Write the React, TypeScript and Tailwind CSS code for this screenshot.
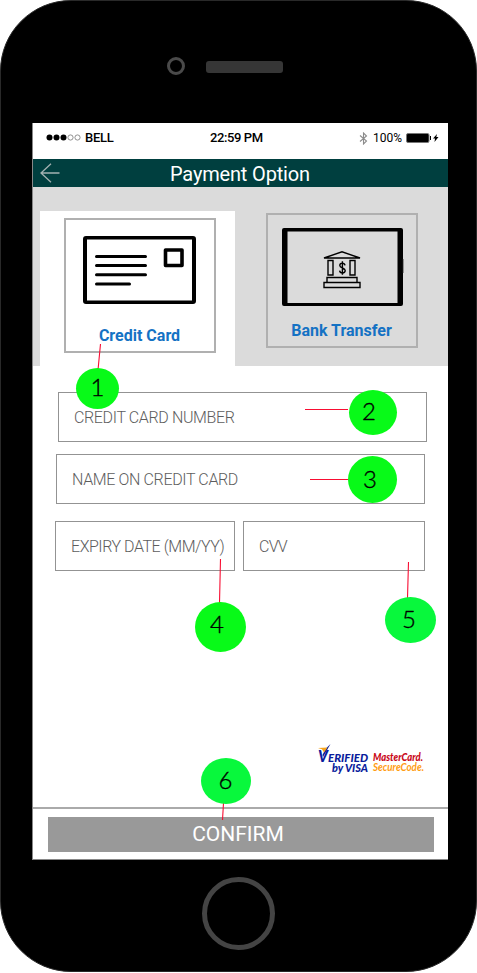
import React from 'react';

type Marker = { label: string; box: string; digit: string };

const markers: Marker[] = [
  { label: '1', box: 'left-[76px] top-[368px] w-[43px] h-[41px] bg-[#08fa18]', digit: 'pb-[3px] pl-0' },
  { label: '2', box: 'left-[349px] top-[390px] w-[48px] h-[45px] bg-[#08fa18]', digit: 'pb-1 pr-2' },
  { label: '3', box: 'left-[348px] top-[456px] w-[49px] h-[47px] bg-[#08fa18]', digit: 'pb-0.5 pr-[5px]' },
  { label: '4', box: 'left-[195px] top-[602px] w-[51px] h-[50px] bg-[#08fa18]', digit: 'pb-1.5 pr-[7px]' },
  { label: '5', box: 'left-[385px] top-[597px] w-[51px] h-[46px] bg-[#08f83c]', digit: 'pb-0.5 pr-[3px]' },
  { label: '6', box: 'left-[201px] top-[758px] w-[50px] h-[46px] bg-[#08f83c]', digit: 'pb-0.5 pr-px' },
];

function StatusBar() {
  return (
    <div className="relative flex h-9 shrink-0 items-center bg-white pb-[7px] text-[13px] font-medium leading-4 text-black">
      <svg className="ml-[13px] shrink-0" width="36" height="8" viewBox="0 0 36 8">
        <g>
          <circle cx="3.5" cy="3.5" r="3" />
          <circle cx="10.5" cy="3.5" r="3" />
          <circle cx="17.5" cy="3.5" r="3" />
        </g>
        <g fill="none" stroke="#777" strokeWidth=".8">
          <circle cx="24.5" cy="3.5" r="2.6" />
          <circle cx="31.5" cy="3.5" r="2.6" />
        </g>
      </svg>
      <span className="ml-[3px] w-[125px] tracking-[-0.3px]">BELL</span>
      <span className="w-[149px] whitespace-nowrap tracking-[-0.4px]">22:59 PM</span>
      <svg className="mt-0.5 shrink-0" width="9" height="13" viewBox="0 0 9 13" fill="none" stroke="#8c8c8c" strokeWidth="1.1">
        <path d="M1 3.5 7.5 9 4.5 12V1l3 3L1 9.5" />
      </svg>
      <span className="ml-[5px] w-[33px] pt-px text-[12px] font-normal">100%</span>
      <svg className="mt-px shrink-0" width="33" height="10" viewBox="0 0 33 10">
        <rect x=".5" y=".5" width="22.5" height="9" rx="1.5" fill="#000" stroke="#777" />
        <rect x="24" y="3" width="1" height="4" />
        <path d="M31 1 27 5.5h2L28.500 9l4-5h-2.200z" />
      </svg>
    </div>
  );
}

function CardIcon() {
  return (
    <svg className="mr-0.5" width="113" height="68" viewBox="0 0 113 68" fill="none" stroke="#000">
      <path fill="#000" fillRule="evenodd" stroke="none" d="M3 0h107a3 3 0 0 1 3 3v62a3 3 0 0 1-3 3H3a3 3 0 0 1-3-3V3a3 3 0 0 1 3-3ZM4 3.500v61h105v-61Z" />
      <path strokeWidth="3" strokeLinecap="round" d="M13.500 20.500h49M13.500 29.500h49M13.500 38.800h49M13.500 48h33" />
      <rect x="82.500" y="14" width="16.500" height="15.500" strokeWidth="3.600" strokeLinejoin="round" />
    </svg>
  );
}

function BankIcon() {
  return (
    <svg className="ml-0.5" width="122" height="79" viewBox="0 0 122 79" fill="none" stroke="#000">
      <path fill="#000" fillRule="evenodd" stroke="none" d="M2 0h117a2 2 0 0 1 2 2v74a2 2 0 0 1-2 2H2a2 2 0 0 1-2-2V2a2 2 0 0 1 2-2ZM5.500 3.500v71.500h110v-71.500Z" />
      <path stroke="#444" strokeWidth=".7" d="M121.200 31v14" />
      <g strokeWidth="1.400">
        <path d="M42 30 60 23.800 78 30Z" />
        <path d="M46 32.500h5v14.500h-5ZM68 32.500h5v14.500h-5ZM45 49.500h30v5h-30ZM42 54.500h36v5h-36Z" />
        <path d="M63 37.300q-.4-2.200-2.700-2.200-2.500 0-2.500 2.300c0 3.200 5.400 2 5.400 5.200q0 2.400-2.700 2.400-2.600 0-2.900-2.400M60.400 33.200v13.600" />
      </g>
    </svg>
  );
}

function Option({ label, icon, className }: { label: string; icon: React.ReactNode; className: string }) {
  return (
    <button className={`flex h-[135px] w-[152px] flex-col items-center border-2 border-[#b0b0b0] ${className}`}>
      {icon}
      <span className="mt-auto whitespace-nowrap pb-[3px] pr-px text-[16px] font-bold leading-[24px] text-[#1472c4]">{label}</span>
    </button>
  );
}

function Field({ label, className, textClass }: { label: string; className: string; textClass: string }) {
  return (
    <div className={`flex h-[50px] items-center border border-[#939393] pl-[15px] pt-px font-light text-[#5d5d5d] ${className}`}>
      <span className={`whitespace-nowrap text-[16px] ${textClass}`}>{label}</span>
    </div>
  );
}

function PaymentLogos() {
  return (
    <svg className="ml-[284px] mt-[173px] block overflow-visible" width="110" height="32" viewBox="0 0 110 32">
      <g fontFamily="Lato, sans-serif" fontWeight="900" fontStyle="italic">
        <g fill="#0a1c9c">
          <text x="1" y="18" fontSize="17" textLength="10" lengthAdjust="spacingAndGlyphs">V</text>
          <text x="11" y="18" fontSize="11" textLength="40" lengthAdjust="spacingAndGlyphs">ERIFIED</text>
          <text x="15" y="28" fontSize="11" textLength="36" lengthAdjust="spacingAndGlyphs">by VISA</text>
          <path d="m6 13 7.500-13-5 5-3 6z" />
        </g>
        <path fill="#f7a51c" d="m1 4 9.500-.5L7 8.500 5 5.200z" />
        <text x="56" y="17" fontSize="10.500" fill="#c90818" textLength="50" lengthAdjust="spacingAndGlyphs">MasterCard.</text>
        <text x="56" y="27" fontSize="10.500" fontWeight="700" fill="#ff9c12" textLength="51" lengthAdjust="spacingAndGlyphs">SecureCode.</text>
      </g>
    </svg>
  );
}

export default function App() {
  return (
    <main className="relative h-[973px] w-[477px] overflow-hidden bg-white font-['Roboto','Liberation_Sans',sans-serif]">
      <div className="flex h-[972px] flex-col rounded-[71px] border border-[#292929] bg-black">
        <div className="flex h-[122px] shrink-0 pl-[166px]">
          <i className="mt-14 size-[18px] rounded-full border-[3px] border-[#4a4a4a]" />
          <i className="ml-[21px] mt-[60px] h-3 w-[77px] rounded-[3px] bg-[#363636]" />
        </div>
        <section className="ml-[31px] flex h-[737px] w-[416px] shrink-0 flex-col border-b border-l border-[#888] bg-white">
          <StatusBar />
          <header className="flex h-7 shrink-0 items-center bg-[#003f3f] text-white">
            <svg className="ml-[7px]" width="20" height="20" viewBox="0 0 20 20" fill="none" stroke="#a3b2b2" strokeWidth="1.300">
              <path d="M11 .8 1 10l10 9.200M1 10h18.500" />
            </svg>
            <h1 className="ml-[110px] whitespace-nowrap pt-0.5 text-[20px] leading-6 tracking-[-0.17px]">Payment Option</h1>
          </header>
          <div className="flex h-[179px] shrink-0 bg-[#dbdbdb] pl-[7px]">
            <div className="mt-6 h-[155px] w-[195px] bg-white pl-6 pt-[7px]">
              <Option label="Credit Card" className="pt-4" icon={<CardIcon />} />
            </div>
            <div className="pl-[31px] pt-[26px]">
              <Option label="Bank Transfer" className="pt-[13px]" icon={<BankIcon />} />
            </div>
          </div>
          <div className="h-[441px] shrink-0 pt-[26px]">
            <Field label="CREDIT CARD NUMBER" className="ml-[25px] w-[369px]" textClass="tracking-[-0.36px]" />
            <Field label="NAME ON CREDIT CARD" className="ml-[23px] mt-3 w-[369px]" textClass="tracking-[-0.36px]" />
            <div className="ml-[22px] mt-[17px] flex gap-2">
              <Field label="EXPIRY DATE (MM/YY)" className="w-[180px]" textClass="tracking-[-0.46px]" />
              <Field label="CVV" className="w-[182px]" textClass="tracking-[-0.75px]" />
            </div>
            <PaymentLogos />
          </div>
          <div className="h-[52px] shrink-0 border-t-2 border-[#aaa] pl-[15px] pt-2">
            <button className="flex h-[35px] w-[386px] items-center justify-center bg-[#999] pr-1.5 pt-px text-[21px] text-white">CONFIRM</button>
          </div>
        </section>
        <div className="ml-[201px] mt-[17px] size-[73px] shrink-0 rounded-full border-[5px] border-[#444]" />
      </div>

      <svg className="pointer-events-none absolute inset-0" width="477" height="973" fill="none" stroke="#f80d32" strokeWidth="1.100">
        <path d="M100.500 344 98 370M305 409.500h43M310 479.500h38M220.500 559 219.500 603M408.500 562 407.500 598M223.500 803 222.500 820" />
      </svg>
      {markers.map((m) => (
        <div key={m.label} className={`absolute flex items-center justify-center rounded-[50%] font-['Lato',sans-serif] text-[24px] font-light leading-6 text-black [-webkit-text-stroke:0.35px_black] ${m.box}`}>
          <span className={m.digit}>{m.label}</span>
        </div>
      ))}
    </main>
  );
}
